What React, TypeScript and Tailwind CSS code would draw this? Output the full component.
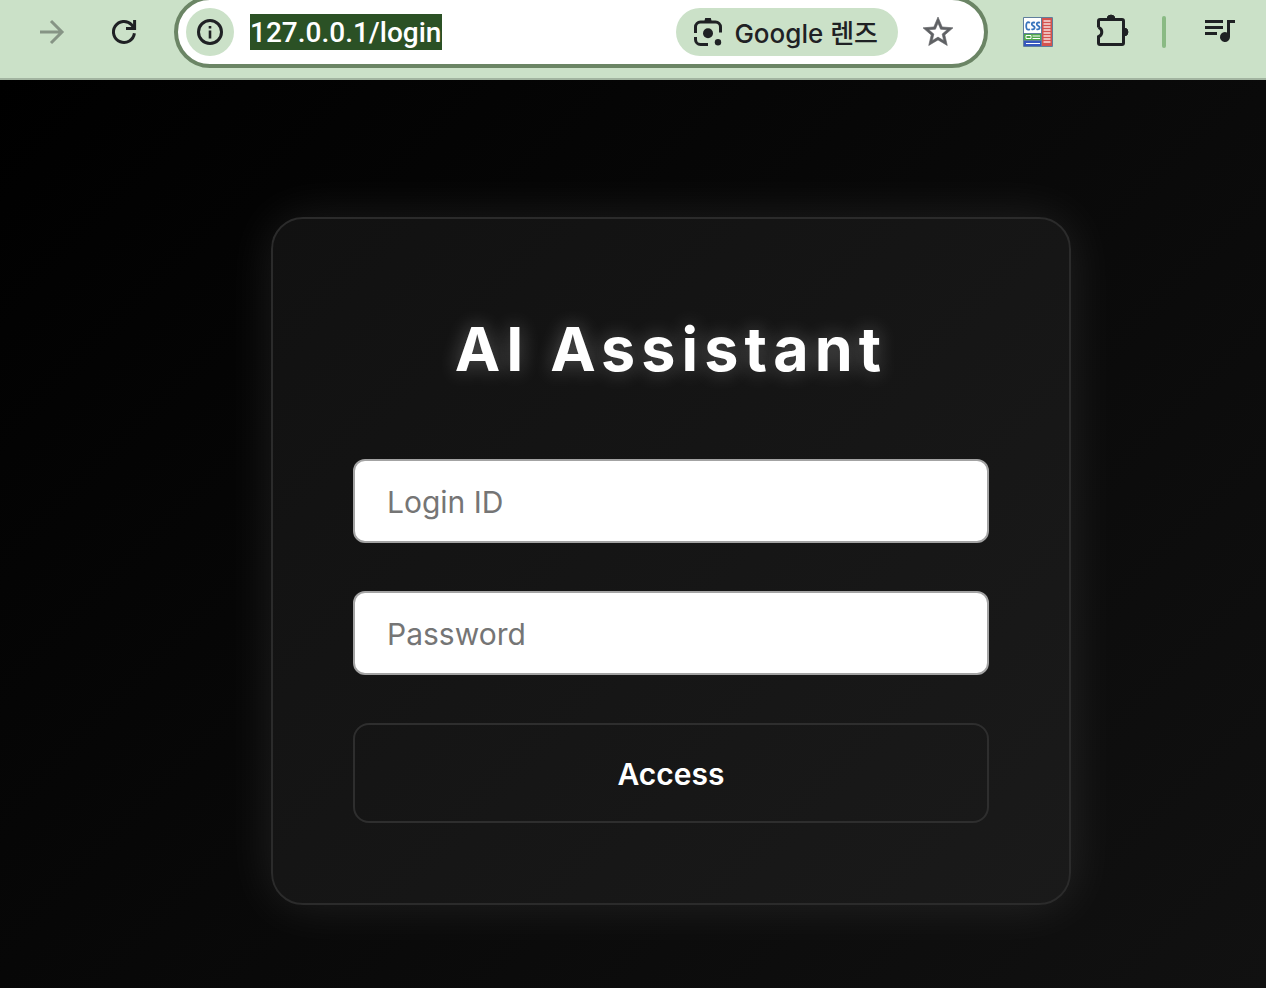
import { useState } from 'react';
import type { FormEvent, ReactNode } from 'react';

interface ToolbarButtonProps {
  label: string;
  disabled?: boolean;
  children: ReactNode;
}

function ToolbarButton({ label, disabled, children }: ToolbarButtonProps) {
  return (
    <button
      type="button"
      aria-label={label}
      disabled={disabled}
      className="size-10 shrink-0 text-[#1f2124] disabled:text-[#869485]"
    >
      {children}
    </button>
  );
}

function ForwardIcon() {
  return (
    <svg viewBox="0 0 40 40" className="size-10" fill="none" stroke="currentColor" strokeWidth="3">
      <path d="M8 20H30M19 9l11 11-11 11" />
    </svg>
  );
}

function ReloadIcon() {
  return (
    <svg viewBox="0 0 40 40" className="size-10" fill="none" stroke="currentColor" strokeWidth="3">
      <path d="M30.4 21.3A10.5 10.5 0 1 1 27.6 12.7L30.2 16" />
      <path d="M30.6 8V16.5H22" />
    </svg>
  );
}

function InfoIcon() {
  return (
    <svg viewBox="0 0 28 28" className="size-7" fill="none" stroke="currentColor">
      <circle cx="14" cy="14" r="11.5" strokeWidth="3" />
      <path d="M14 12.5V20.5M14 8v2.6" strokeWidth="2.6" />
    </svg>
  );
}

function LensIcon() {
  return (
    <svg viewBox="0 0 36 36" className="size-9" fill="none" stroke="currentColor" strokeWidth="3">
      <path d="M5.5 19V13a5 5 0 0 1 5-5H25.5a5 5 0 0 1 5 5V18.5" />
      <path d="M5.5 23V25.5a5 5 0 0 0 5 5H18" />
      <path d="M14.2 8l1-4h5.6l1 4z" fill="currentColor" stroke="none" />
      <circle cx="18" cy="19.3" r="5" fill="currentColor" stroke="none" />
      <circle cx="28" cy="28.2" r="3.2" fill="currentColor" stroke="none" />
    </svg>
  );
}

function StarIcon() {
  return (
    <svg
      viewBox="0 0 24 24"
      className="size-9"
      fill="currentColor"
      stroke="currentColor"
      strokeWidth="0.4"
    >
      <path d="M22 9.24l-7.19-.62L12 2 9.19 8.63 2 9.24l5.46 4.73L5.82 21 12 17.27 18.18 21l-1.63-7.03L22 9.24zM12 15.4l-3.76 2.27 1-4.28-3.32-2.88 4.38-.38L12 6.1l1.71 4.04 4.38.38-3.32 2.88 1 4.28L12 15.4z" />
    </svg>
  );
}

function CssIcon() {
  return (
    <svg viewBox="0 0 40 40" className="size-10">
      <rect x="5" y="5" width="30" height="30" rx="1" fill="#5f7f9d" />
      <rect x="6" y="6" width="17" height="15" fill="#ffffff" />
      <rect x="6" y="22" width="17" height="6" fill="#4ea64b" />
      <rect x="6" y="29" width="17" height="5" fill="#3657bd" />
      <rect x="24" y="6" width="10" height="28" fill="#d4524e" />
      <path
        d="M12 10.8c-3-1.6-3.8.4-3.8 3.2s.8 4.6 3.8 3.2M17 10.7c-4-1-4 2.2-1.8 3.2s2 4.3-1.8 3.3M22 10.7c-4-1-4 2.2-1.8 3.2s2 4.3-1.8 3.3"
        fill="none"
        stroke="#3975bd"
        strokeWidth="1.8"
      />
      <path d="M8 23.5h5v3H8zM14.5 24H22M14.5 26.5H22M8 31.5H22" fill="none" stroke="#ffffff" strokeWidth="1" />
      <path
        d="M25.5 9h7M25.5 12h7M25.5 15h7M25.5 18h7M25.5 21h7M25.5 24h7M25.5 27h7M25.5 30h7"
        stroke="#ffffff"
        strokeWidth="1.4"
        opacity="0.8"
      />
    </svg>
  );
}

function ExtensionsIcon() {
  return (
    <svg viewBox="0 0 40 40" className="size-10" fill="none" stroke="currentColor" strokeWidth="3">
      <path d="M6.5 15.5V9Q6.5 7.5 8 7.5H30Q31.5 7.5 31.5 9V31Q31.5 32.5 30 32.5H8Q6.5 32.5 6.5 31V24.7A5 5 0 0 0 6.5 15.3" />
      <path d="M15 7a4 4 0 0 1 8 0zM32 16a4 4 0 0 1 0 8z" fill="currentColor" strokeWidth="1" />
    </svg>
  );
}

function PlaylistIcon() {
  return (
    <svg viewBox="0 0 40 40" className="size-10" fill="currentColor">
      <path d="M5 8h18v3H5zM5 14h18v3H5zM5 20h12v3H5z" />
      <path d="M27 8h8v3h-5v14a5 5 0 1 1-3-4.6z" />
    </svg>
  );
}

function AddressBar() {
  const [url, setUrl] = useState('127.0.0.1/login');

  return (
    <div className="-mt-1 mx-[30px] flex h-18 min-w-0 flex-1 items-center rounded-full border-4 border-[#6b8565] bg-white pr-7 pl-2 text-[#1f2124]">
      <button
        type="button"
        aria-label="Site information"
        className="flex size-12 shrink-0 items-center justify-center rounded-full bg-[#cbe1c8]"
      >
        <InfoIcon />
      </button>
      <input
        type="text"
        aria-label="Address"
        value={url}
        onChange={(e) => setUrl(e.target.value)}
        className="ml-4 h-9 w-48 min-w-0 bg-[#2b5125] pt-px font-['Roboto',sans-serif] text-[28px] font-medium text-white outline-none"
      />
      <button
        type="button"
        className="ml-auto flex h-12 shrink-0 items-center gap-2 rounded-full bg-[#cbe1c8] pr-5 pl-[14px] text-[26px] font-medium whitespace-nowrap"
      >
        <LensIcon />
        <span className="pt-[2px]">Google 렌즈</span>
      </button>
      <button type="button" aria-label="Bookmark this page" className="ml-[22px] shrink-0 text-[#5f6164]">
        <StarIcon />
      </button>
    </div>
  );
}

function BrowserToolbar() {
  return (
    <header className="flex h-20 items-start border-b-2 border-[#a2b4a0] bg-[#cbe1c8] pr-[26px] pl-8">
      <div className="flex h-16 min-w-0 flex-1 items-center">
        <div className="flex gap-8">
          <ToolbarButton label="Forward" disabled>
            <ForwardIcon />
          </ToolbarButton>
          <ToolbarButton label="Reload">
            <ReloadIcon />
          </ToolbarButton>
        </div>
        <div className="flex h-16 min-w-0 flex-1 items-start">
          <AddressBar />
        </div>
        <div className="flex items-center gap-[34px]">
          <ToolbarButton label="CSS viewer">
            <CssIcon />
          </ToolbarButton>
          <ToolbarButton label="Extensions">
            <ExtensionsIcon />
          </ToolbarButton>
          <div className="-ml-1 h-8 w-1 rounded-full bg-[#8aba84]" />
          <ToolbarButton label="Media controls">
            <PlaylistIcon />
          </ToolbarButton>
        </div>
      </div>
    </header>
  );
}

function LoginForm() {
  const [loginId, setLoginId] = useState('');
  const [password, setPassword] = useState('');

  const onSubmit = (e: FormEvent) => {
    e.preventDefault();
  };

  const fieldClass =
    'h-21 w-full rounded-xl border-2 border-[#a3a3a3] bg-white px-8 pt-[2px] text-[30px] text-black placeholder:text-[#757575]';

  return (
    <form
      onSubmit={onSubmit}
      className="flex w-full max-w-[800px] flex-col gap-12 rounded-4xl border-2 border-[#2b2b2b] bg-linear-135/srgb from-[#111111] to-[#1a1a1a] p-20 shadow-[0_0_50px_rgba(255,255,255,0.1)]"
    >
      <h1 className="mb-4 pt-1 text-center text-[61px] leading-[92px] font-bold tracking-widest text-white [text-shadow:0_0_20px_rgba(255,255,255,0.3)]">
        AI Assistant
      </h1>
      <input
        type="text"
        name="loginId"
        aria-label="Login ID"
        placeholder="Login ID"
        value={loginId}
        onChange={(e) => setLoginId(e.target.value)}
        className={fieldClass}
      />
      <input
        type="password"
        name="password"
        aria-label="Password"
        placeholder="Password"
        value={password}
        onChange={(e) => setPassword(e.target.value)}
        className={fieldClass}
      />
      <button
        type="submit"
        className="h-25 w-full rounded-2xl border-2 border-[#2e2e2e] pt-[2px] text-[30px] font-semibold text-white"
      >
        Access
      </button>
    </form>
  );
}

export default function App() {
  return (
    <div className="flex min-h-screen flex-col font-['Inter','Noto_Sans_CJK_KR',sans-serif]">
      <BrowserToolbar />
      <main className="flex flex-1 items-start justify-center bg-linear-135/srgb from-black to-[#111111] pt-[137px] pb-20 pl-[76px]">
        <LoginForm />
      </main>
    </div>
  );
}
